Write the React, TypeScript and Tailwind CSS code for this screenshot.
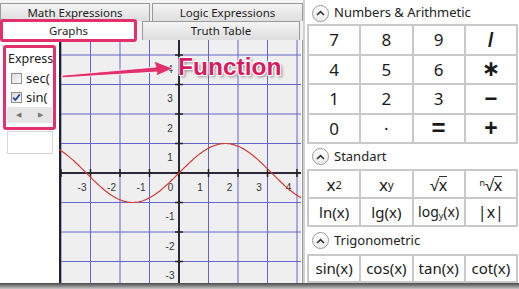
import React from 'react';

const U = 29.5;
const OX = 120;
const OY = 133;

const curve = (() => {
    const pts: string[] = [];
    for (let x = -4.2; x <= 4.25; x += 0.05) {
        pts.push(`${(OX + x * U).toFixed(1)},${(OY - Math.sin(x) * U).toFixed(1)}`);
    }
    return 'M' + pts.join(' L');
})();

const Graph: React.FC = () => {
    const xs = [-4, -3, -2, -1, 0, 1, 2, 3, 4];
    const ys = [-3, -2, -1, 0, 1, 2, 3, 4];
    return (
        <svg width="242" height="243" className="block">
            <rect width="242" height="243" fill="#efefef" />
            {xs.map(k => (
                <line key={'v' + k} x1={OX + k * U} y1="0" x2={OX + k * U} y2="243" stroke="#6464cc" strokeWidth="1" />
            ))}
            {ys.map(k => (
                <line key={'h' + k} x1="0" y1={OY - k * U} x2="242" y2={OY - k * U} stroke="#6464cc" strokeWidth="1" />
            ))}
            <line x1="1" y1="0" x2="1" y2="243" stroke="#222" strokeWidth="2" />
            <line x1="0" y1={OY} x2="242" y2={OY} stroke="#2a2a3a" strokeWidth="2" />
            <line x1={OX} y1="0" x2={OX} y2="243" stroke="#2a2a3a" strokeWidth="2" />
            {xs.map(k => (
                <line key={'tx' + k} x1={OX + k * U} y1={OY - 4} x2={OX + k * U} y2={OY + 4} stroke="#222" strokeWidth="1.5" />
            ))}
            {ys.map(k => (
                <line key={'ty' + k} x1={OX - 4} y1={OY - k * U} x2={OX + 4} y2={OY - k * U} stroke="#222" strokeWidth="1.5" />
            ))}
            <g fontFamily="'Liberation Sans', Arial, sans-serif" fontSize="10" fill="#333" textAnchor="middle">
                {[-3, -2, -1, 0, 1, 2, 3, 4].map(k => (
                    <text key={'lx' + k} x={OX + k * U - 8.5} y={OY + 17.5}>{k}</text>
                ))}
                {[-3, -2, -1, 1, 2, 3, 4].map(k => (
                    <text key={'ly' + k} x={OX - 9} y={OY - k * U + 17.5}>{k}</text>
                ))}
            </g>
            <path d={curve} fill="none" stroke="#d43a3a" strokeWidth="1.2" />
        </svg>
    );
};

const Check: React.FC<{ checked?: boolean }> = ({ checked }) => (
    <span className="w-[11px] h-[11px] border border-[#8e8f8f] bg-gradient-to-br from-[#dcdcdc] to-[#fafafa] flex items-center justify-center shrink-0">
        {checked && (
            <svg width="9" height="9" viewBox="0 0 9 9">
                <path d="M1.2 4.6 L3.4 7 L7.8 1.4" fill="none" stroke="#253f8c" strokeWidth="1.7" />
            </svg>
        )}
    </span>
);

const Section: React.FC<{ title: string; h: string }> = ({ title, h }) => (
    <div className={`flex items-center gap-[5px] pl-[5px] ${h}`}>
        <span className="w-[17px] h-[17px] rounded-full border border-[#9a9a9a] bg-gradient-to-b from-white to-[#ececec] flex items-center justify-center">
            <svg width="9" height="6" viewBox="0 0 9 6">
                <path d="M1 5 L4.5 1.6 L8 5" fill="none" stroke="#333" strokeWidth="1.6" />
            </svg>
        </span>
        <span className="text-[13px] text-[#222]">{title}</span>
    </div>
);

const Key: React.FC<{ children: React.ReactNode; cls?: string }> = ({ children, cls }) => (
    <div className={`bg-white flex items-center justify-center text-[#1a1a1a] leading-none ${cls ?? ''}`}>{children}</div>
);

const OP = "font-['Liberation_Sans',Arial,sans-serif] font-bold";

export default function App() {
    return (
        <div className="w-[519px] h-[289px] relative overflow-hidden bg-[#f0f0f0] flex flex-col font-['Noto_Sans','Open_Sans',sans-serif]">
            <div className="flex h-[283px]">
                {/* Tab control */}
                <div className="w-[303px] flex flex-col">
                    <div className="h-[3px] bg-[#f4f4f4]" />
                    <div className="flex h-[18px] gap-[2px]">
                        <div className="w-[150px] border border-b-0 border-[#9a9a9a] bg-gradient-to-b from-[#f4f4f4] to-[#dedede] flex items-center justify-center text-[11.5px] text-[#1e1e1e] leading-none">Math Expressions</div>
                        <div className="flex-1 border border-b-0 border-[#9a9a9a] bg-gradient-to-b from-[#f4f4f4] to-[#dedede] flex items-center justify-center text-[11.5px] text-[#1e1e1e] leading-none">Logic Expressions</div>
                    </div>
                    <div className="flex h-[19px] gap-[5px]">
                        <div className="w-[137px] bg-white flex items-center justify-center text-[11.5px] text-[#1e1e1e] leading-none">Graphs</div>
                        <div className="w-[158px] border border-b-0 border-[#9a9a9a] bg-gradient-to-b from-[#f4f4f4] to-[#dedede] flex items-center justify-center text-[11.5px] text-[#1e1e1e] leading-none">Truth Table</div>
                    </div>
                    <div className="flex-1 flex bg-white border-r border-[#9a9a9a]">
                        <div className="w-[59px] bg-white flex flex-col">
                            <div className="mt-[9px] ml-[7px] w-[45px]">
                                <div className="h-[20px] text-[12.5px] text-[#222] whitespace-nowrap leading-[20px] pl-[1px]">Express</div>
                                <div className="h-[19px] flex items-center gap-[4px] pl-[4px] text-[13px] text-[#222] whitespace-nowrap">
                                    <Check />
                                    <span>sec(</span>
                                </div>
                                <div className="h-[19px] flex items-center gap-[4px] pl-[4px] text-[13px] text-[#222] whitespace-nowrap">
                                    <Check checked />
                                    <span>sin(</span>
                                </div>
                                <div className="h-[16px] bg-[#e6e6e6] flex items-center justify-around text-[7px] text-[#777]">
                                    <span>◀</span>
                                    <span>▶</span>
                                </div>
                            </div>
                            <div className="mt-[8px] ml-[7px] w-[46px] h-[23px] border border-[#d6d6d6] bg-white" />
                        </div>
                        <div className="flex-1 overflow-hidden">
                            <Graph />
                        </div>
                    </div>
                </div>

                {/* Buttons panel */}
                <div className="w-[216px] bg-white border-l-2 border-[#d0d0d0] pl-[2px] pr-[1px] pt-[2px] flex flex-col">
                    <Section title="Numbers & Arithmetic" h="h-[22px]" />
                    <div className="grid grid-cols-4 gap-[2px] p-[2px] bg-[#c9c9c9] auto-rows-[27.5px]">
                        <Key cls="text-[17px]">7</Key>
                        <Key cls="text-[17px]">8</Key>
                        <Key cls="text-[17px]">9</Key>
                        <Key cls={`text-[20px] ${OP}`}>/</Key>
                        <Key cls="text-[17px]">4</Key>
                        <Key cls="text-[17px]">5</Key>
                        <Key cls="text-[17px]">6</Key>
                        <Key cls="text-[22px] font-bold font-['DejaVu_Sans',sans-serif]">∗</Key>
                        <Key cls="text-[17px]">1</Key>
                        <Key cls="text-[17px]">2</Key>
                        <Key cls="text-[17px]">3</Key>
                        <Key cls={`text-[22px] ${OP}`}>−</Key>
                        <Key cls="text-[17px]">0</Key>
                        <Key cls="text-[17px]">·</Key>
                        <Key cls={`text-[24px] ${OP}`}>=</Key>
                        <Key cls={`text-[23px] ${OP}`}>+</Key>
                    </div>
                    <Section title="Standart" h="h-[25px]" />
                    <div className="grid grid-cols-4 gap-[2px] p-[2px] bg-[#c9c9c9] auto-rows-[26px]">
                        <Key cls="text-[17px]">
                            <span>x<sup className="text-[11px] relative -top-[2px]">2</sup></span>
                        </Key>
                        <Key cls="text-[17px]">
                            <span>x<sup className="text-[11px] relative -top-[2px]">y</sup></span>
                        </Key>
                        <Key cls="text-[16px]">
                            <span>√<span className="border-t border-[#333] leading-[16px] inline-block">x</span></span>
                        </Key>
                        <Key cls="text-[16px]">
                            <span><sup className="text-[9px]">n</sup>√<span className="border-t border-[#333] leading-[16px] inline-block">x</span></span>
                        </Key>
                        <Key cls="text-[15px]">ln(x)</Key>
                        <Key cls="text-[15px]">lg(x)</Key>
                        <Key cls="text-[14px]">
                            <span>log<sub className="text-[9px]">y</sub>(x)</span>
                        </Key>
                        <Key cls="text-[16px]">|x|</Key>
                    </div>
                    <Section title="Trigonometric" h="h-[27px]" />
                    <div className="grid grid-cols-4 gap-[2px] p-[2px] bg-[#c9c9c9] auto-rows-[25px]">
                        <Key cls="text-[15px]">sin(x)</Key>
                        <Key cls="text-[15px]">cos(x)</Key>
                        <Key cls="text-[15px]">tan(x)</Key>
                        <Key cls="text-[15px]">cot(x)</Key>
                    </div>
                </div>
            </div>
            <div className="flex-1 bg-gradient-to-b from-[#4a4a4a] to-[#c8c8c8]" />

            {/* Annotations */}
            <div className="absolute left-0 top-[19px] w-[137px] h-[23px] border-[3px] border-[#e2306c] rounded-[3px]" />
            <div className="absolute left-[3px] top-[45px] w-[53px] h-[85px] border-[3px] border-[#e2306c] rounded-[3px]" />
            <svg className="absolute left-0 top-0" width="200" height="100">
                <polygon
                    points="62,75.3 156,67 154,61 173,68.5 156,76 157,72 62,77.8"
                    fill="#e2306c"
                    stroke="#fff"
                    strokeWidth="0.8"
                />
            </svg>
            <div className="absolute left-[178px] top-[55px] text-[24.5px] font-bold leading-none text-[#d81b60] font-['Liberation_Sans',Arial,sans-serif] [text-shadow:-1px_-1px_0_#fff,1px_-1px_0_#fff,-1px_1px_0_#fff,1px_1px_0_#fff,2px_2px_3px_rgba(0,0,0,0.45)]">
                Function
            </div>
        </div>
    );
}
